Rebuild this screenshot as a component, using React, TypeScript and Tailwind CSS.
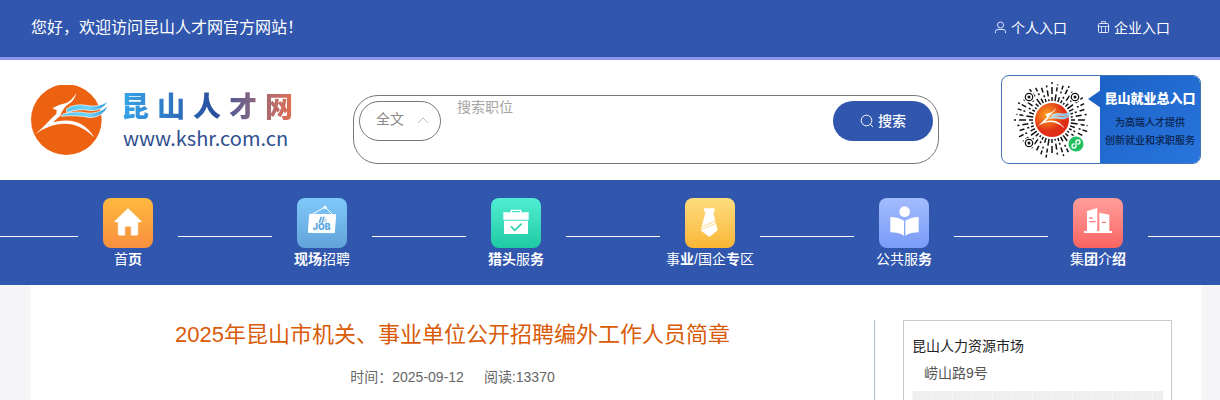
import { FC, ReactNode } from 'react';

const navItems: { name: ReactNode; tile: string; icon: ReactNode }[] = [
  {
    name: (
      <>
        首<b>页</b>
      </>
    ),
    tile: 'bg-linear-to-b from-[#ffb93f] to-[#f78f3f]',
    icon: (
      <path
        fill="#fff"
        stroke="#fff"
        strokeWidth="3"
        strokeLinejoin="round"
        d="M75 32 L115 71 H104 V108 Q104 111 101 111 H85 V87 Q85 84 82 84 H68 Q65 84 65 87 V111 H50 Q46 111 46 108 V71 H35 Z"
      />
    ),
  },
  {
    name: (
      <>
        <b>现场</b>招聘
      </>
    ),
    tile: 'bg-linear-to-b from-[#7fc9fa] to-[#62a3d9]',
    icon: (
      <>
        <path d="M44 50 L84 27 L107 50" fill="none" stroke="#fff" strokeWidth="3" />
        <circle cx="84" cy="28" r="5" fill="#fff" />
        <path d="M38 49 L116 50 L112 104 L34 103 Z" fill="#fff" stroke="#fff" strokeWidth="3" strokeLinejoin="round" />
        <path d="M67 74 L73 56 M75 74 L81 56" stroke="#5fa8df" strokeWidth="5" />
        <path d="M80 74 L87 63 V74" stroke="#a6cdea" strokeWidth="3" fill="none" />
        <text x="74" y="97" textAnchor="middle" fontSize="26" fontWeight="900" fontFamily="Inter, sans-serif" fill="#5fa8df">
          JOB
        </text>
      </>
    ),
  },
  {
    name: (
      <>
        <b>猎头</b>服<b>务</b>
      </>
    ),
    tile: 'bg-linear-to-b from-[#4eedd3] to-[#1ccba4]',
    icon: (
      <>
        <path d="M61 44 V37 H89 V44" fill="none" stroke="#fff" strokeWidth="4" />
        <path d="M37 43 H113 V65 H37 Z M39 68 H111 V108 H39 Z" fill="#fff" />
        <path d="M60 85 L71 97 L92 77" fill="none" stroke="#2bd3b0" strokeWidth="5" />
      </>
    ),
  },
  {
    name: (
      <>
        事<b>业</b>/国企<b>专</b>区
      </>
    ),
    tile: 'bg-linear-to-b from-[#fddd7d] to-[#f9b632]',
    icon: (
      <>
        <path d="M57 31 H89 V37 L85 45 L98 97 L73 117 L47 97 L61 45 L57 37 Z" fill="#fff" />
        <path d="M50 87 L93 68 M48 95 L96 75" stroke="#fbc75a" strokeWidth="2" />
      </>
    ),
  },
  {
    name: (
      <>
        公共服<b>务</b>
      </>
    ),
    tile: 'bg-linear-to-b from-[#a3bbff] to-[#7a9cf7]',
    icon: (
      <>
        <circle cx="77" cy="41" r="16" fill="#fff" />
        <path d="M34 57 Q58 58 75 68 V113 Q58 103 34 103 Z M79 68 Q96 58 119 57 V103 Q96 103 79 113 Z" fill="#fff" />
      </>
    ),
  },
  {
    name: (
      <>
        集<b>团</b>介<b>绍</b>
      </>
    ),
    tile: 'bg-linear-to-b from-[#ff9d9b] to-[#f96462]',
    icon: (
      <>
        <path d="M42 39 L73 30 V99 H79 V44 L109 50 V99 H117 V105 H33 V99 H42 Z" fill="#fff" />
        <path d="M49 60 H59 M49 71 H68 M86 73 H99" stroke="#fb7b79" strokeWidth="4" />
      </>
    ),
  },
];

const rays = Array.from({ length: 40 }, (_, i) => i);
const dashes = ['4 3 7 3', '3 2 2 3 5 2', '7 3 4 2', '2 3 6 3 2 3', '5 4 2 2'];
const eyes = [
  [15, 15],
  [61, 15],
  [15, 61],
];

const Swallow: FC<{ gradient: string }> = ({ gradient }) => (
  <>
    <path
      d="M13 148 Q42 122 62 100 L76 86 L77 76 L64 70 L84 60 L108 53 Q124 44 136 24 Q130 48 112 58 Q98 66 88 92 L66 112 Q120 98 158 122 Q180 138 189 157 Q164 130 128 119 Q66 106 13 148 Z"
      fill="#fff"
    />
    <path
      d="M107 71 Q132 55 166 61 Q198 69 230 50 Q214 78 178 77 Q145 69 107 83 Z M96 87 Q136 76 168 84 Q202 88 232 62 Q216 97 176 98 Q138 89 90 94 Z"
      fill={`url(#${gradient})`}
      stroke="#fff"
      strokeWidth="2"
    />
  </>
);

const Logo: FC = () => (
  <a href="#" className="flex shrink-0 items-center gap-3">
    <svg viewBox="0 0 234 210" className="h-[70px] w-[78px]" aria-hidden="true">
      <defs>
        <linearGradient id="wing">
          <stop offset="0" stopColor="#4cc4f4" />
          <stop offset="0.6" stopColor="#6fd4f8" />
          <stop offset="1" stopColor="#2a8fd0" />
        </linearGradient>
      </defs>
      <circle cx="106" cy="104" r="106" fill="#ed6210" />
      <Swallow gradient="wing" />
    </svg>
    <div className="w-[172px]">
      <div className="flex justify-between bg-linear-to-r from-[#35a5ea] via-[#294e9e] via-55% to-[#e56d4b] bg-clip-text text-[28px] leading-9 font-black text-transparent">
        <span>昆</span>
        <span>山</span>
        <span>人</span>
        <span>才</span>
        <span>网</span>
      </div>
      <div className="pl-[2px] font-['Noto_Sans_CJK_SC',sans-serif] text-[20px] leading-6 text-[#2f4f8f]">www.kshr.com.cn</div>
    </div>
  </a>
);

const QrCode: FC = () => (
  <svg viewBox="0 0 76 76" className="h-[76px] w-[76px]" aria-hidden="true">
    <defs>
      <radialGradient id="sun" cx="0.35" cy="0.35">
        <stop offset="0" stopColor="#fba321" />
        <stop offset="1" stopColor="#e02d16" />
      </radialGradient>
      <linearGradient id="qrWing">
        <stop offset="0" stopColor="#b9ecff" />
        <stop offset="1" stopColor="#56b8ea" />
      </linearGradient>
    </defs>
    {rays.map((i) => (
      <line
        key={i}
        x1="38"
        y1="19"
        x2="38"
        y2={i % 3 === 0 ? 0 : 2}
        stroke="#111"
        strokeWidth="1.5"
        strokeDasharray={dashes[(i * 7) % 5]}
        transform={`rotate(${i * 9} 38 38)`}
      />
    ))}
    {eyes.map(([x, y]) => (
      <g key={`${x}-${y}`}>
        <circle cx={x} cy={y} r="5.5" fill="#fff" />
        <circle cx={x} cy={y} r="3.7" fill="none" stroke="#111" strokeWidth="1.2" />
        <circle cx={x} cy={y} r="1.5" fill="#111" />
      </g>
    ))}
    <circle cx="38" cy="38" r="17" fill="url(#sun)" />
    <g transform="translate(21 22) scale(0.155)">
      <Swallow gradient="qrWing" />
    </g>
    <circle cx="62" cy="62" r="9" fill="#fff" />
    <circle cx="62" cy="62" r="7.5" fill="#1fc05f" />
    <path
      d="M60 62 a2 2 0 1 0 2 2 V60 a2 2 0 1 1 2 2"
      fill="none"
      stroke="#fff"
      strokeWidth="1.3"
      strokeLinecap="round"
    />
  </svg>
);

const App: FC = () => {
  return (
    <div className="min-h-screen bg-[#f5f5f7] font-['Liberation_Sans','Noto_Sans_CJK_SC',sans-serif] text-sm text-[#333]">
      <div className="flex h-[60px] items-center justify-between border-b-3 border-[#8f94ee] bg-[#3056ae] pr-[50px] pb-[2px] pl-[31px] text-white">
        <p className="text-base">您好，欢迎访问昆山人才网官方网站！</p>
        <div className="flex gap-[30px]">
          <a href="#" className="flex items-center gap-1">
            <svg viewBox="0 0 13 13" className="h-[13px] w-[13px]" fill="none" stroke="#dce6ff" aria-hidden="true">
              <circle cx="6.5" cy="4" r="3" />
              <path d="M1.5 12 V10.5 Q1.5 8.5 4 8.5 H9 Q11.5 8.5 11.5 10.5 V12" />
            </svg>
            个人入口
          </a>
          <a href="#" className="flex items-center gap-1">
            <svg viewBox="0 0 13 13" className="h-[13px] w-[13px]" fill="none" stroke="#e6edff" aria-hidden="true">
              <rect x="1.5" y="2.5" width="10" height="9" rx="1" />
              <path d="M4.5 2.5 V0.5 H8.5 V2.5 M0.5 5.5 H12.5 M4.5 5.5 V11.5 M8.5 5.5 V11.5" strokeWidth="0.8" />
            </svg>
            企业入口
          </a>
        </div>
      </div>

      <header className="flex h-[120px] items-center bg-white pr-[19px] pl-[31px]">
        <Logo />
        <form className="mt-[35px] mr-[62px] ml-[60px] flex h-[69px] flex-1 items-start self-start rounded-[25px] border border-[#777] p-[5px]">
          <div className="relative">
            <select
              aria-label="搜索范围"
              className="h-10 w-[82px] appearance-none rounded-[20px] border border-[#777] bg-white pb-1 pl-4 text-[#888]"
            >
              <option>全文</option>
            </select>
            <svg viewBox="0 0 12 7" className="pointer-events-none absolute top-4 right-3 h-[7px] w-3" fill="none" stroke="#bbb" aria-hidden="true">
              <path d="M1 6 L6 1 L11 6" />
            </svg>
          </div>
          <input
            type="text"
            aria-label="搜索职位"
            placeholder="搜索职位"
            className="-mt-1 ml-4 h-5 min-w-0 flex-1 leading-5 outline-none placeholder:text-[#a5a5a5]"
          />
          <button type="button" className="flex h-10 w-[100px] items-center justify-center gap-1 rounded-[20px] bg-[#3056ae] font-medium text-white">
            <svg viewBox="0 0 14 14" className="h-[14px] w-[14px]" fill="none" stroke="#fff" aria-hidden="true">
              <circle cx="6.5" cy="6.5" r="5.3" />
              <path d="M10.5 10.5 L13 13" />
            </svg>
            搜索
          </button>
        </form>
        <a href="#" className="mt-[15px] flex h-[89px] w-[200px] shrink-0 self-start overflow-hidden rounded-lg border border-[#4476b8] bg-white">
          <div className="flex flex-1 items-center justify-center pl-[2px]">
            <QrCode />
          </div>
          <div className="relative flex w-[100px] flex-col items-center bg-linear-to-br from-[#1c62c6] to-[#2875dd] pt-3 whitespace-nowrap text-[#0b2450]">
            <svg viewBox="0 0 13 18" className="absolute top-[14px] -left-3 h-[18px] w-[13px]" aria-hidden="true">
              <path d="M13 0 V18 L0 9 Z" fill="#1c62c6" />
            </svg>
            <span className="text-[13px] leading-[22px] font-black text-white">昆山就业总入口</span>
            <span className="mt-1 text-[10px] leading-[18px] font-medium">为高端人才提供</span>
            <span className="text-[10px] leading-[18px] font-medium">创新就业和求职服务</span>
          </div>
        </a>
      </header>

      <nav className="flex h-[105px] bg-[#3056ae] pt-[18px] text-white">
        <span className="mt-[38px] h-px w-[78px] bg-white" />
        {navItems.map((el, index) => (
          <div key={index} className="contents">
            {index > 0 && <span className="mt-[38px] h-px flex-1 bg-white" />}
            <a href="#" className="flex w-[100px] flex-col items-center whitespace-nowrap">
              <span className={`block h-[50px] w-[50px] rounded-lg ${el.tile}`}>
                <svg viewBox="0 0 150 150" className="h-full w-full" aria-hidden="true">
                  {el.icon}
                </svg>
              </span>
              <span className="leading-[22px]">{el.name}</span>
            </a>
          </div>
        ))}
        <span className="mt-[38px] h-px w-[72px] bg-white" />
      </nav>

      <main className="mr-[19px] ml-[31px] flex min-h-[115px] bg-white pt-[35px] pr-[29px]">
        <article className="flex-1 text-center">
          <h1 className="text-[22px] leading-[30px] text-[#d95b08]">2025年昆山市机关、事业单位公开招聘编外工作人员简章</h1>
          <p className="mt-[18px] flex justify-center gap-5 leading-[18px] text-[#666]">
            <span>时间：2025-09-12</span>
            <span>阅读:13370</span>
          </p>
        </article>
        <div className="mr-7 w-px bg-[#a9c3d2]" />
        <aside className="w-[269px] border border-b-0 border-[#c8c9cc] px-2 pt-3">
          <h2 className="leading-[26px] text-[#222]">昆山人力资源市场</h2>
          <p className="pl-3 leading-7 text-[#555]">崂山路9号</p>
          <div className="mt-1 h-[9px] bg-[#efefef] bg-[linear-gradient(to_right,#f7f7f7_1px,transparent_1px)] bg-size-[20px_20px]" />
        </aside>
      </main>
    </div>
  );
};
export default App;
